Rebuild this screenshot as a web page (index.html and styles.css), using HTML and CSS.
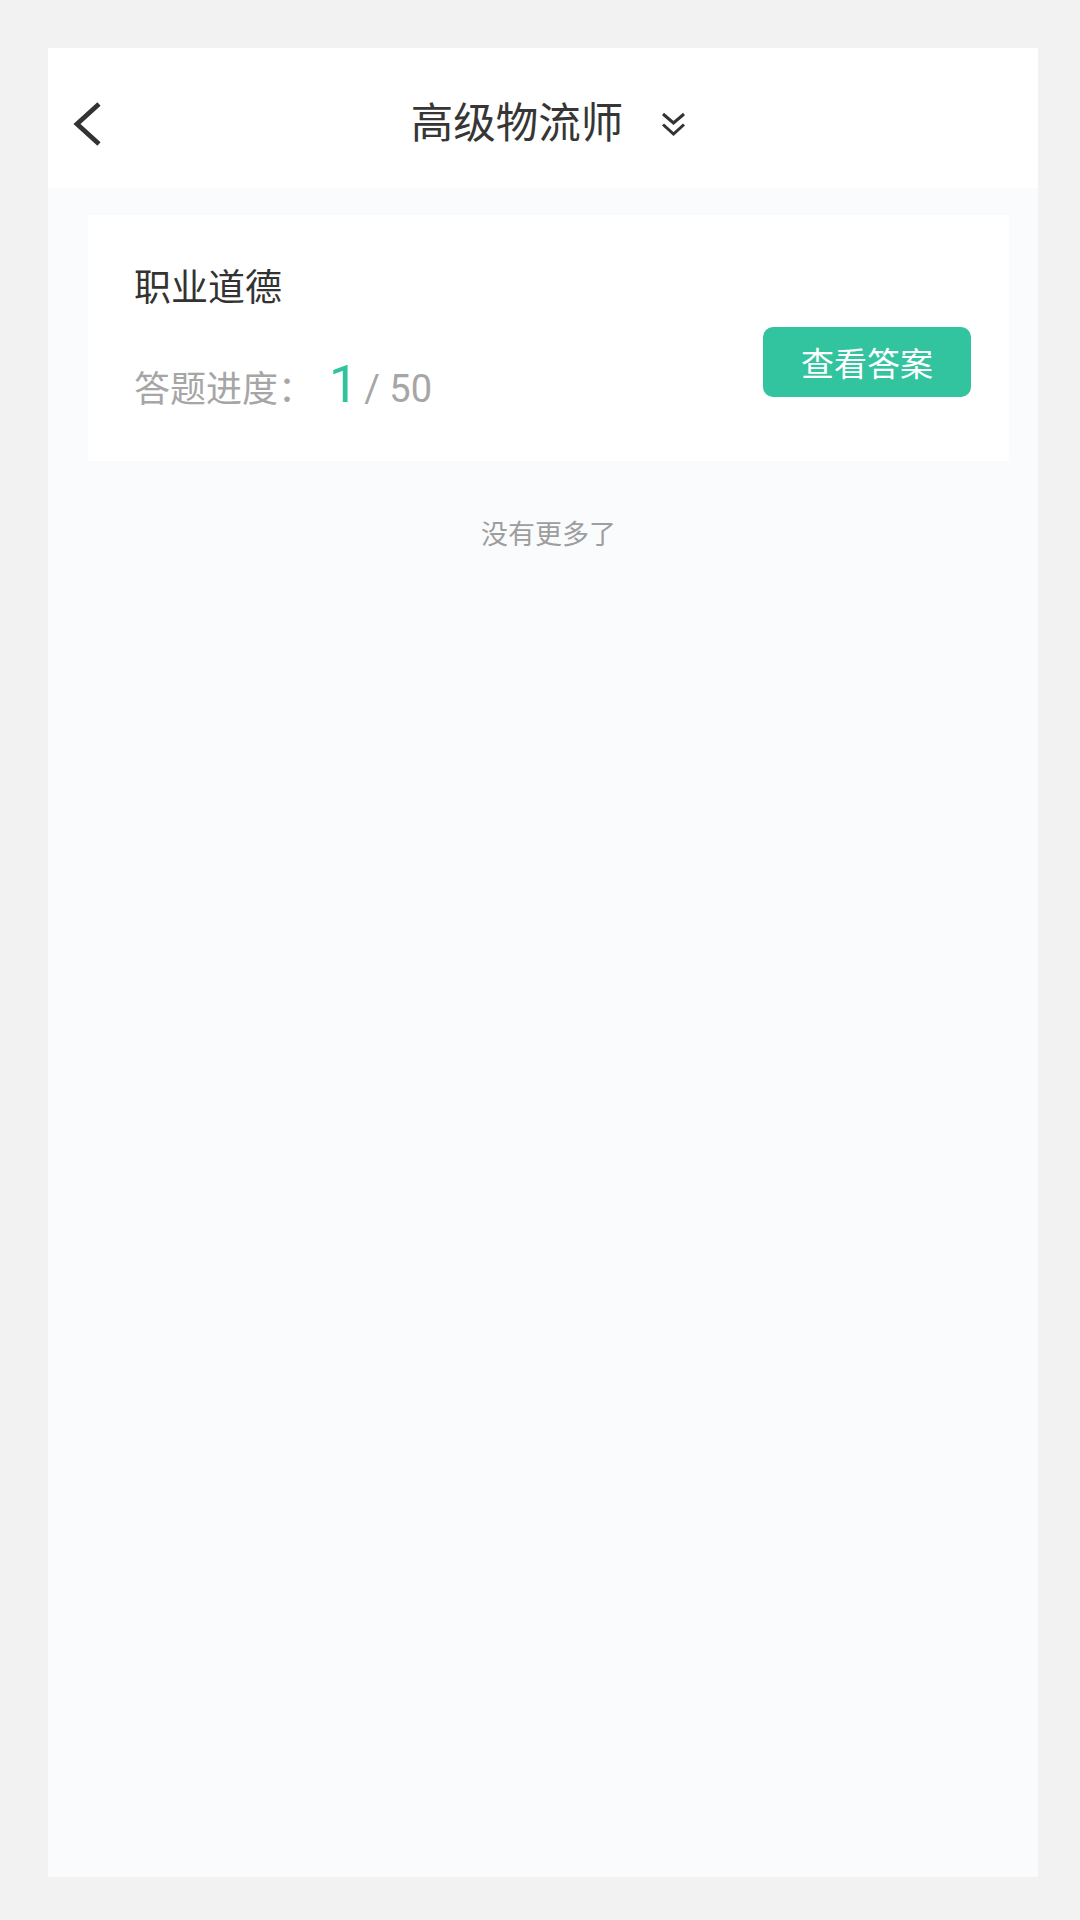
FILE: index.html
```html
<!DOCTYPE html>
<html lang="zh-CN">
<head>
<meta charset="utf-8">
<title>高级物流师</title>
<link rel="stylesheet" href="styles.css">
</head>
<body>
<div class="screen">
  <header class="topbar">
    <button class="back" aria-label="返回">
      <svg width="30" height="48" viewBox="0 0 30 48"><path d="M26 4 L4 24 L26 44" fill="none" stroke="#333" stroke-width="4.8"/></svg>
    </button>
    <div class="title">
      <span>高级物流师</span>
      <svg class="dd" width="24" height="26" viewBox="0 0 24 26"><path d="M2 3 L12.5 12 L23 3 M2 13.5 L12.5 23 L23 13.5" fill="none" stroke="#333" stroke-width="3"/></svg>
    </div>
    <div></div>
  </header>
  <main class="content">
    <div class="card">
      <div class="info">
        <div class="name">职业道德</div>
        <div class="progress"><span class="label">答题进度：</span><span class="cur">1</span><span class="total">/ 50</span></div>
      </div>
      <button class="answer">查看答案</button>
    </div>
    <p class="nomore">没有更多了</p>
  </main>
</div>
</body>
</html>
```
FILE: styles.css
```css
html, body {
  margin: 0;
}
body {
  background: #f2f2f2;
  font-family: Roboto, "Noto Sans CJK SC", sans-serif;
  padding: 48px 42px 43px 48px;
  box-sizing: border-box;
  height: 1920px;
}
.screen {
  height: 1829px;
  display: flex;
  flex-direction: column;
  background: #fafbfd;
}
.topbar {
  height: 140px;
  box-sizing: border-box;
  padding: 12px 0 0 10px;
  background: #fff;
  display: grid;
  grid-template-columns: 1fr auto 1fr;
  align-items: center;
}
.back {
  justify-self: start;
  margin-left: 15px;
  background: none;
  border: 0;
  padding: 0;
  display: flex;
  width: 30px;
  height: 48px;
}
.title {
  display: flex;
  align-items: center;
  gap: 38px;
  font-size: 42.5px;
  line-height: 50px;
  color: #363636;
}
.dd {
  display: block;
}
.content {
  padding: 27px 29px 0 40px;
}
.card {
  background: #fff;
  height: 246px;
  box-sizing: border-box;
  display: flex;
  justify-content: space-between;
  align-items: flex-start;
  padding: 0 38px 0 46px;
}
.info {
  padding-top: 52px;
}
.name {
  font-size: 37px;
  line-height: 44px;
  color: #333;
}
.progress {
  display: flex;
  align-items: baseline;
  margin-top: 48px;
  color: #a6a6a6;
}
.label {
  font-size: 36px;
  line-height: 1;
}
.cur {
  font-size: 52px;
  line-height: 1;
  color: #2fc49e;
  margin-left: 15px;
}
.total {
  font-size: 38px;
  line-height: 1;
  margin-left: 6px;
}
.answer {
  margin-top: 112px;
  width: 208px;
  height: 70px;
  border: 0;
  border-radius: 10px;
  background: #31c49f;
  color: #fff;
  font-family: inherit;
  font-size: 33px;
  padding: 0;
}
.nomore {
  margin: 54px 0 0;
  text-align: center;
  font-size: 27px;
  line-height: 40px;
  color: #9e9e9e;
}
```
